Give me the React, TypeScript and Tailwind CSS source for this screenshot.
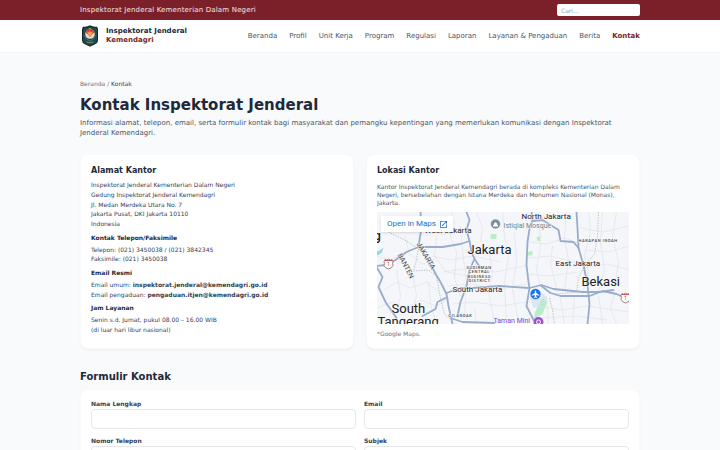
import type { ReactNode } from "react";

const navItems = [
  "Beranda",
  "Profil",
  "Unit Kerja",
  "Program",
  "Regulasi",
  "Laporan",
  "Layanan & Pengaduan",
  "Berita",
  "Kontak",
];

const minorRoads = [
  "M0 44 L14 48 L30 40 L46 52 L60 46",
  "M8 78 L20 70 L34 76 L50 70 L62 80",
  "M0 96 L16 90 L30 96 L44 88 L60 94 L74 86",
  "M20 58 L24 84 L18 112",
  "M36 60 L40 84 L34 112",
  "M52 70 L54 92 L60 112",
  "M28 24 L32 38 L20 52",
  "M60 24 L58 44 L70 60 L92 64",
  "M76 0 L74 24 L80 40 L78 66 L84 84",
  "M84 14 L86 40 L90 70 L88 104",
  "M56 44 L74 48 L96 44 L124 50",
  "M66 60 L96 56 L118 60 L148 54",
  "M72 74 L96 72 L120 78 L150 72",
  "M76 92 L98 90 L124 94 L150 90",
  "M100 0 L106 16 L104 30",
  "M112 34 L116 60 L112 80 L118 112",
  "M126 0 L128 24 L132 44 L128 70 L130 112",
  "M138 20 L140 50 L136 76 L142 112",
  "M98 96 L100 112",
  "M152 30 L170 32 L188 26 L204 32",
  "M151 46 L174 44 L198 50",
  "M150 62 L172 64 L202 60",
  "M162 10 L164 34 L160 58 L164 74",
  "M176 34 L174 52 L180 76",
  "M190 0 L188 26 L192 48 L188 78",
  "M212 0 L214 20 L208 44 L212 60 L206 82",
  "M226 0 L224 30 L228 58 L222 80",
  "M240 0 L236 24 L242 50 L238 76",
  "M204 16 L226 20 L253 14",
  "M208 38 L232 40 L253 34",
  "M206 56 L230 52 L253 58",
  "M170 84 L172 112",
  "M184 86 L188 112",
  "M198 84 L196 112",
  "M222 84 L226 112",
  "M238 82 L234 96 L240 112",
  "M160 94 L186 98 L210 94 L253 100",
  "M166 106 L200 104 L230 108",
];

const majorRoads = [
  "M44 0 L45 16 L43 28 L42 35",
  "M0 54 L10 53 L19 48 L30 40 L42 35 L66 35 L84 32 L93 29",
  "M90 0 L93 8 L90 18 L93 29 L95 40 L98 47 L104 56",
  "M98 47 L93 58 L90 74 L84 90 L81 104",
  "M43 36 L50 46 L57 58 L65 72 L70 82 L72 94 L76 112",
  "M0 55 L6 65 L2 75 L9 90 L20 106",
  "M69 86 L61 90 L59 97 L46 104",
  "M70 81 L84 76 L96 76 L123 74 L153 76 L165 73 L177 77 L206 80 L223 80 L237 78",
  "M165 74 L174 81 L184 84 L213 84 L226 79 L240 82 L253 88",
  "M74 106 L86 110 L118 111",
  "M155 0 L156 8 L153 17 L151 30 L150 53 L152 70 L153 76 L150 94 L157 108",
  "M156 9 L166 8 L182 18 L184 29 L197 30 L202 36 L207 53 L211 73 L213 92 L211 112",
  "M200 0 L201 16 L202 36",
];

function MapDrawing() {
  return (
    <svg
      viewBox="0 0 253 112"
      preserveAspectRatio="xMidYMid slice"
      role="img"
      aria-label="Peta Jakarta"
      className="block h-full w-full font-[family-name:Roboto,sans-serif]"
    >
      <rect width="253" height="112" fill="#f5f6f9" />
      <path d="M153 84 l12 -4 l6 6 l-4 8 l-10 2 z" fill="#dde6f7" />
      <path d="M166 86 l5 4 l-5 12 l-9 5 l2 -8 z" fill="#b9ecc8" />
      <path d="M114 22 h6 v5 h-6 z M151 40 l5 -1 v4 l-4 1 z M160 25 l4 -1 v5 h-3 z" fill="#bcebca" />
      <path d="M0 40 l7 -4 l-2 5 l-5 3 z" fill="#8edbe6" />
      <g fill="none" stroke="#dfe3eb" strokeWidth="0.7">
        {minorRoads.map((d) => (
          <path key={d} d={d} />
        ))}
      </g>
      <g fill="none" stroke="#9ba0a8" strokeWidth="0.6" strokeDasharray="1.4 1.2">
        <path d="M12 20 L32 30 L42 37 L40 48 L37 59 L52 58 L60 64 L62 76 L64 86 L68 102 L72 106" />
        <path d="M222 0 L221 24 L218 42 L208 54 L202 66 L200 80 L180 82" />
        <path d="M173 86 L176 98 L178 112" />
      </g>
      <g fill="none" stroke="#9aaccb" strokeWidth="1.8" strokeLinejoin="round" strokeLinecap="round">
        {majorRoads.map((d) => (
          <path key={d} d={d} />
        ))}
      </g>
      <g fill="#202124" stroke="#f8f9fb" strokeWidth="1" paintOrder="stroke" strokeLinejoin="round">
        <g fontSize="8">
          <text x="145" y="7">North Jakarta</text>
          <text x="48" y="21">West Jakarta</text>
          <text x="179" y="54">East Jakarta</text>
          <text x="76" y="80">South Jakarta</text>
        </g>
        <text x="-3" y="28" fontSize="13" fontWeight="500">g</text>
        <text x="91" y="42" fontSize="13">Jakarta</text>
        <text x="205" y="74" fontSize="13">Bekasi</text>
        <text x="15" y="101" fontSize="13">South</text>
        <text x="1" y="114" fontSize="13">Tangerang</text>
        <g fontSize="4" fontWeight="500" letterSpacing="0.6" fill="#3c4043">
          <text x="90" y="57">SUDIRMAN</text>
          <text x="92" y="61">CENTRAL</text>
          <text x="91" y="66">BUSINESS</text>
          <text x="92" y="70">DISTRICT</text>
          <text x="72" y="105">CILANDAK</text>
          <text x="202" y="30">HARAPAN INDAH</text>
        </g>
        <g fontSize="7" fill="#3c4043">
          <text transform="translate(40 32) rotate(60)">JAKARTA</text>
          <text transform="translate(21 43) rotate(62)">BANTEN</text>
        </g>
        <text x="127" y="16" fontSize="7" fill="#6b7f88">Istiqlal Mosque</text>
        <text x="117" y="111" fontSize="7" fill="#8a44c8">Taman Mini</text>
      </g>
      <circle cx="119" cy="12" r="5" fill="#78909c" stroke="#ffffff" strokeWidth="0.6" />
      <path d="M116.500 14.500 v-1.500 h0.800 v-1 q1.700 -3.500 3.400 0 v1 h0.800 v1.500 z" fill="#ffffff" />
      <circle cx="159" cy="82" r="5.500" fill="#1a73e8" stroke="#ffffff" strokeWidth="0.6" />
      <path
        d="M159 78.500 q0.700 0 0.700 1 v1.600 l3 1.800 v0.900 l-3 -0.800 v1.500 l0.900 0.800 v0.600 l-1.600 -0.400 l-1.600 0.400 v-0.600 l0.900 -0.800 v-1.500 l-3 0.800 v-0.900 l3 -1.800 v-1.600 q0 -1 0.700 -1z"
        fill="#ffffff"
      />
      <circle cx="162" cy="110" r="5" fill="#9c4fd0" />
      <circle cx="162" cy="110" r="2" fill="none" stroke="#ffffff" strokeWidth="1" />
      <g fill="#ffffff" stroke="#8b5d60" strokeWidth="0.8">
        <path d="M8.500 47.500 l1.500 0.700 l2 -1 l2 1 l1.500 -0.700 l1 2 q-0.800 2 0 4 q-1 2.500 -4.500 3.500 q-3.500 -1 -4.500 -3.500 q0.800 -2 0 -4z" />
        <path d="M245.500 81.500 l1.500 0.700 l2 -1 l2 1 l1.500 -0.700 l1 2 q-0.800 2 0 4 q-1 2.500 -4.500 3.500 q-3.500 -1 -4.500 -3.500 q0.800 -2 0 -4z" />
      </g>
      <path d="M8.500 48.500 h7 M245.500 82.500 h7" stroke="#d65a4f" strokeWidth="1.200" />
      <g fontSize="5" fill="#b3443c" textAnchor="middle">
        <text x="12" y="54">1</text>
        <text x="249" y="88">1</text>
      </g>
    </svg>
  );
}

function OpenIcon() {
  return (
    <svg viewBox="3 3 18 18" fill="currentColor" className="size-[7px]" aria-hidden="true">
      <path d="M19 19H5V5h7V3H5a2 2 0 0 0-2 2v14a2 2 0 0 0 2 2h14c1.100 0 2-.9 2-2v-7h-2v7zM14 3v2h3.590l-9.830 9.830 1.410 1.410L19 6.410V10h2V3h-7z" />
    </svg>
  );
}

function Logo() {
  return (
    <svg viewBox="0 0 20 24" className="h-6 w-5" aria-hidden="true">
      <path d="M10 1.200 C12.500 2.500 15 2.600 17 2.800 L18 5 V16.500 L17.200 19 C15 20.600 12.500 21.200 10 22.800 C7.500 21.200 5 20.600 2.800 19 L2 16.500 V5 L3 2.800 C5 2.600 7.500 2.500 10 1.200z" fill="#1c262c" />
      <path d="M10 2.400 C12.500 3.600 14.500 3.700 16.300 3.900 L17 5.500 V16.300 L16.400 18.200 C14.500 19.500 12.200 20.200 10 21.500 C7.800 20.200 5.500 19.500 3.600 18.200 L3 16.300 V5.500 L3.700 3.900 C5.500 3.700 7.500 3.600 10 2.400z" fill="#1b4a52" />
      <circle cx="10" cy="10" r="4.800" fill="#ead9cb" />
      <path d="M5.400 8.500 A4.800 4.800 0 0 1 14.600 8.500 L12.500 10 L10 13 L7.500 10z" fill="#d2402c" />
      <path d="M7 7.500 L9.200 8.500 L10 6.500 L10.800 8.500 L13 7.500 L11.500 11 L10 12.500 L8.500 11z" fill="#e9a857" />
      <path d="M4.500 11 Q5.500 16 10 17 Q14.500 16 15.500 11" fill="none" stroke="#3f7a74" strokeWidth="1" />
      <path d="M6.500 18 Q10 19.500 13.500 18" fill="none" stroke="#a8965a" strokeWidth="0.800" />
      <path d="M10 3.500 l0.400 0.800 h0.900 l-0.700 0.500 l0.300 0.800 l-0.900 -0.500 l-0.900 0.500 l0.300 -0.800 l-0.700 -0.500 h0.900z" fill="#b9a96b" />
    </svg>
  );
}

function Card({ children }: { children: ReactNode }) {
  return (
    <div className="rounded-lg border border-gray-50 bg-white p-2.5 shadow-[0_1px_2px_rgba(15,23,42,0.05)]">
      {children}
    </div>
  );
}

function InfoGroup({ title, children }: { title: string; children: ReactNode }) {
  return (
    <>
      <h3 className="mt-1 mb-0.5 font-semibold text-gray-800">{title}</h3>
      <p>{children}</p>
    </>
  );
}

function Field({ id, label, type = "text" }: { id: string; label: string; type?: string }) {
  return (
    <div>
      <label htmlFor={id} className="mb-px block text-[6px] leading-2 font-semibold text-gray-700">
        {label}
      </label>
      <input id={id} type={type} className="block h-5 w-full rounded border border-gray-200 bg-white px-1.5 text-[7px]" />
    </div>
  );
}

export default function App() {
  return (
    <div className="min-h-screen bg-[#f9fafc] font-['DejaVu_Sans',sans-serif] text-gray-800">
      <div className="bg-[#7b1f28] px-20">
        <div className="flex h-5 items-center justify-between">
          <span className="text-[7px] leading-[10px] tracking-wide text-white/90">
            Inspektorat Jenderal Kementerian Dalam Negeri
          </span>
          <input
            type="search"
            aria-label="Cari"
            placeholder="Cari..."
            className="h-3 w-[83px] rounded-xs bg-white px-1 text-[6px] text-gray-700 placeholder:text-gray-400"
          />
        </div>
      </div>

      <header className="border-b border-gray-100 bg-white px-20">
        <div className="flex h-8 items-center justify-between">
          <a href="#beranda" className="flex items-center gap-1.5">
            <Logo />
            <span className="text-[7px] leading-[9px] font-bold text-gray-800">
              Inspektorat Jenderal
              <span className="block text-[#7b1f28]">Kemendagri</span>
            </span>
          </a>
          <nav className="flex gap-3 text-[7px] leading-[10px] text-gray-600">
            {navItems.map((item) => (
              <a
                key={item}
                href="#kontak"
                className={item === "Kontak" ? "font-semibold text-[#7b1f28]" : ""}
              >
                {item}
              </a>
            ))}
          </nav>
        </div>
      </header>

      <main className="px-20 pt-[27px] pb-6">
        <nav aria-label="Breadcrumb" className="text-[6px] leading-2 text-gray-500">
          <a href="#beranda">Beranda</a> / <span className="text-gray-700">Kontak</span>
        </nav>
        <h1 className="mt-2 text-[15px] leading-[18px] font-bold text-gray-800">Kontak Inspektorat Jenderal</h1>
        <p className="mt-1 text-[7px] leading-[10px] text-gray-600">
          Informasi alamat, telepon, email, serta formulir kontak bagi masyarakat dan pemangku kepentingan yang
          memerlukan komunikasi dengan Inspektorat Jenderal Kemendagri.
        </p>

        <section className="mt-4 grid grid-cols-2 gap-3">
          <Card>
            <h2 className="text-[8px] leading-3 font-semibold">Alamat Kantor</h2>
            <div className="mt-[3px] text-[6px] leading-relaxed text-gray-700">
              <p>
                Inspektorat Jenderal Kementerian Dalam Negeri
                <br />
                Gedung Inspektorat Jenderal Kemendagri
                <br />
                Jl. Medan Merdeka Utara No. 7
                <br />
                Jakarta Pusat, DKI Jakarta 10110
                <br />
                Indonesia
              </p>
              <InfoGroup title="Kontak Telepon/Faksimile">
                Telepon: (021) 3450038 / (021) 3842345
                <br />
                Faksimile: (021) 3450038
              </InfoGroup>
              <InfoGroup title="Email Resmi">
                Email umum: <strong>inspektorat.jenderal@kemendagri.go.id</strong>
                <br />
                Email pengaduan: <strong>pengaduan.itjen@kemendagri.go.id</strong>
              </InfoGroup>
              <InfoGroup title="Jam Layanan">
                Senin s.d. Jumat, pukul 08.00 – 16.00 WIB
                <br />
                (di luar hari libur nasional)
              </InfoGroup>
            </div>
          </Card>

          <Card>
            <h2 className="text-[8px] leading-3 font-semibold">Lokasi Kantor</h2>
            <p className="mt-1.5 text-[6px] leading-2 text-gray-600">
              Kantor Inspektorat Jenderal Kemendagri berada di kompleks Kementerian Dalam Negeri, bersebelahan dengan
              Istana Merdeka dan Monumen Nasional (Monas), Jakarta.
            </p>
            <div className="relative mt-[5px] h-28 overflow-hidden">
              <MapDrawing />
              <a
                href="#peta"
                className="absolute top-1 left-1 flex h-4 items-center gap-1 bg-white px-1.5 font-[family-name:Roboto,sans-serif] text-[8px] text-[#1a6fc4] shadow-sm"
              >
                Open in Maps
                <OpenIcon />
              </a>
            </div>
            <p className="mt-1.5 text-[6px] leading-2 text-gray-500">*Google Maps.</p>
          </Card>
        </section>

        <section className="mt-5">
          <h2 className="mb-1 text-[10px] leading-4 font-semibold">Formulir Kontak</h2>
          <Card>
            <form className="grid grid-cols-2 gap-2">
              <Field id="nama" label="Nama Lengkap" />
              <Field id="email" label="Email" type="email" />
              <Field id="telepon" label="Nomor Telepon" type="tel" />
              <Field id="subjek" label="Subjek" />
            </form>
          </Card>
        </section>
      </main>
    </div>
  );
}
